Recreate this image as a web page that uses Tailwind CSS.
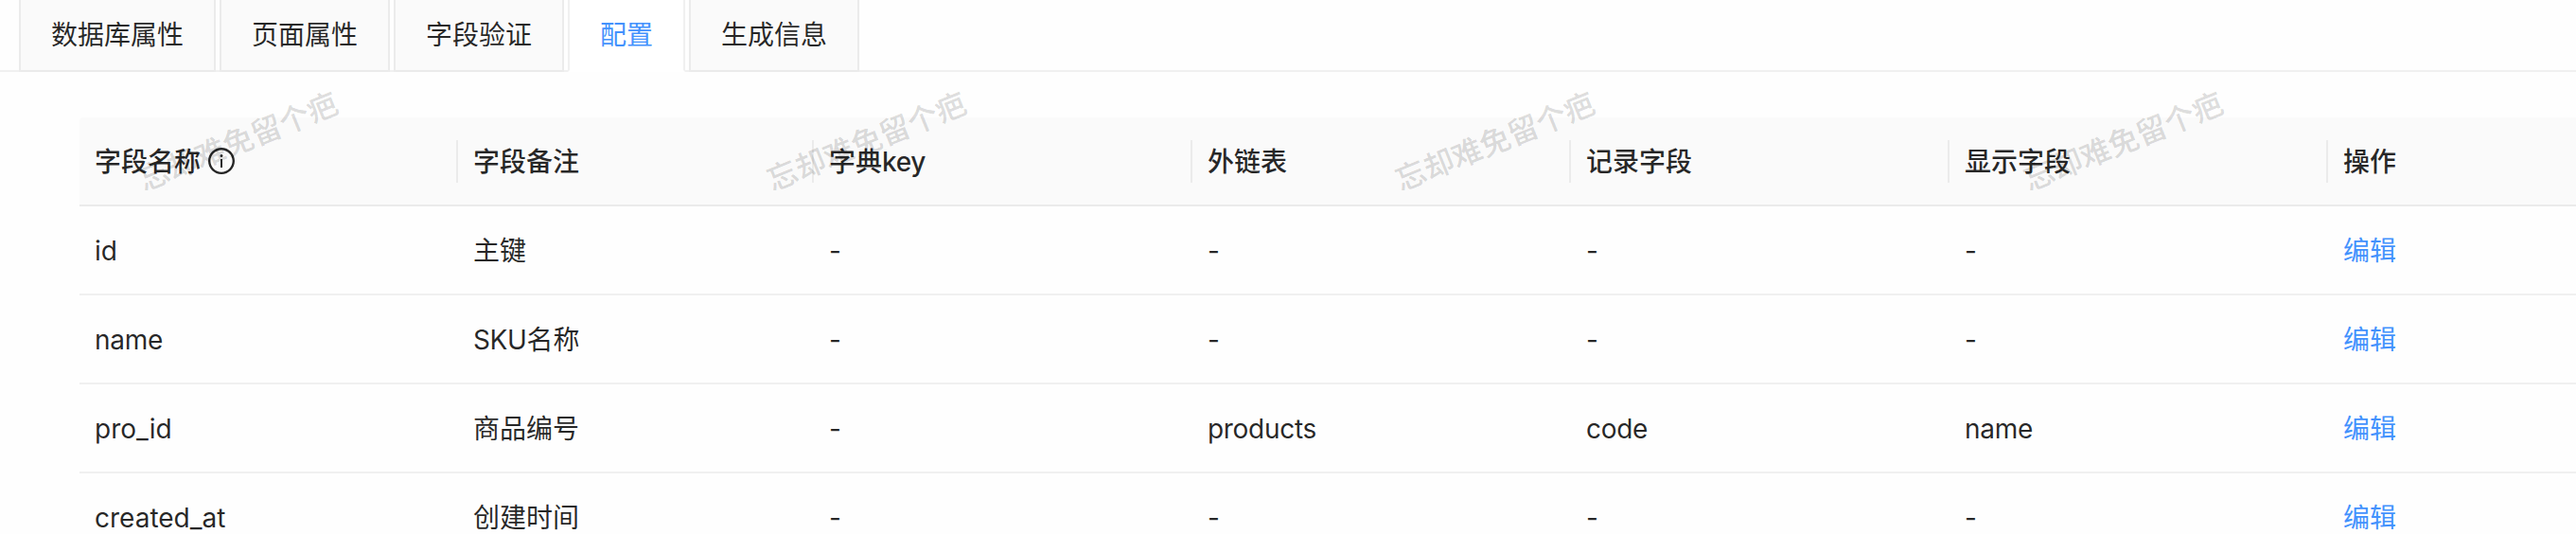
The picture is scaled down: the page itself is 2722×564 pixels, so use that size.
<!DOCTYPE html>
<html lang="zh-CN">
<head>
<meta charset="utf-8">
<title>字段配置</title>
<script src="https://cdn.jsdelivr.net/npm/@tailwindcss/browser@4"></script>
</head>
<body class="relative h-[564px] w-[2722px] overflow-hidden bg-[#fefefe] font-['Inter','Noto_Sans_CJK_SC',sans-serif] text-[28px] leading-[44px] text-black/85">
<nav class="flex h-[76px] items-stretch">
  <div class="w-5 border-b-2 border-[#f0f0f0]"></div>
  <div class="border-x-2 border-b-2 border-[#ebebeb] bg-[#fafafa] px-8 pt-[15px] whitespace-nowrap">数据库属性</div>
  <div class="w-1 border-b-2 border-[#f0f0f0]"></div>
  <div class="border-x-2 border-b-2 border-[#ebebeb] bg-[#fafafa] px-8 pt-[15px] whitespace-nowrap">页面属性</div>
  <div class="w-1 border-b-2 border-[#f0f0f0]"></div>
  <div class="border-x-2 border-b-2 border-[#ebebeb] bg-[#fafafa] px-8 pt-[15px] whitespace-nowrap">字段验证</div>
  <div class="w-1 border-b-2 border-[#f0f0f0]"></div>
  <div class="border-x-2 border-b-2 border-x-[#f0f0f0] border-b-white bg-white px-8 pt-[15px] whitespace-nowrap text-[#4392fd]">配置</div>
  <div class="w-1 border-b-2 border-[#f0f0f0]"></div>
  <div class="border-x-2 border-b-2 border-[#ebebeb] bg-[#fafafa] px-8 pt-[15px] whitespace-nowrap">生成信息</div>
  <div class="flex-1 border-b-2 border-[#f0f0f0]"></div>
</nav>
<main class="h-[488px] overflow-hidden pt-12 pl-[84px]">
  <table class="w-[2638px] table-fixed border-separate border-spacing-0 text-left">
    <colgroup><col class="w-[400px]"><col class="w-[376px]"><col class="w-[400px]"><col class="w-[400px]"><col class="w-[400px]"><col class="w-[400px]"><col class="w-[262px]"></colgroup>
    <thead>
      <tr class="h-[94px] leading-[46px] *:border-b-2 *:border-[#ebebeb] *:bg-[#fafafa] *:p-0 *:font-medium">
        <th class="rounded-tl"><div class="flex h-[45px] items-center gap-2 border-r-2 border-[#ebebeb] pl-4"><span class="pt-px">字段名称</span><svg class="size-7" viewBox="64 64 896 896" fill="currentColor"><path d="M512 64C264.6 64 64 264.6 64 512s200.6 448 448 448 448-200.6 448-448S759.4 64 512 64zm0 820c-205.4 0-372-166.6-372-372s166.6-372 372-372 372 166.6 372 372-166.6 372-372 372z"/><path d="M464 336a48 48 0 1096 0 48 48 0 10-96 0zm72 112h-48c-4.4 0-8 3.6-8 8v272c0 4.4 3.6 8 8 8h48c4.4 0 8-3.6 8-8V456c0-4.4-3.6-8-8-8z"/></svg></div></th>
        <th><div class="h-[45px] border-r-2 border-[#ebebeb] pl-4">字段备注</div></th>
        <th><div class="h-[45px] border-r-2 border-[#ebebeb] pl-4">字典<span class="tracking-[-0.3px]">key</span></div></th>
        <th><div class="h-[45px] border-r-2 border-[#ebebeb] pl-4">外链表</div></th>
        <th><div class="h-[45px] border-r-2 border-[#ebebeb] pl-4">记录字段</div></th>
        <th><div class="h-[45px] border-r-2 border-[#ebebeb] pl-4">显示字段</div></th>
        <th><div class="h-[45px] pl-4">操作</div></th>
      </tr>
    </thead>
    <tbody>
      <tr class="h-[94px] *:border-b-2 *:border-[#f0f0f0] *:px-4 *:pt-0.5 *:pb-0"><td>id</td><td>主键</td><td>-</td><td>-</td><td>-</td><td>-</td><td class="text-[#4392fd]">编辑</td></tr>
      <tr class="h-[94px] *:border-b-2 *:border-[#f0f0f0] *:px-4 *:pt-0.5 *:pb-0"><td class="tracking-[-0.3px]">name</td><td><span class="tracking-[-0.4px]">SKU</span>名称</td><td>-</td><td>-</td><td>-</td><td>-</td><td class="text-[#4392fd]">编辑</td></tr>
      <tr class="h-[94px] *:border-b-2 *:border-[#f0f0f0] *:px-4 *:pt-0.5 *:pb-0"><td>pro_id</td><td>商品编号</td><td>-</td><td class="tracking-[-0.3px]">products</td><td class="tracking-[-0.3px]">code</td><td class="tracking-[-0.3px]">name</td><td class="text-[#4392fd]">编辑</td></tr>
      <tr class="h-[94px] *:px-4 *:pt-0.5 *:pb-0.5"><td>created_at</td><td>创建时间</td><td>-</td><td>-</td><td>-</td><td>-</td><td class="text-[#4392fd]">编辑</td></tr>
    </tbody>
  </table>
</main>
<!-- watermark overlay, one mark every 664px -->
<div class="pointer-events-none absolute top-[127px] left-[140px] flex gap-[440px] text-[32px] leading-[46px] font-medium whitespace-nowrap text-black/15">
  <span class="w-56 -rotate-22">忘却难免留个疤</span><span class="w-56 -rotate-22">忘却难免留个疤</span><span class="w-56 -rotate-22">忘却难免留个疤</span><span class="w-56 -rotate-22">忘却难免留个疤</span>
</div>
</body>
</html>
